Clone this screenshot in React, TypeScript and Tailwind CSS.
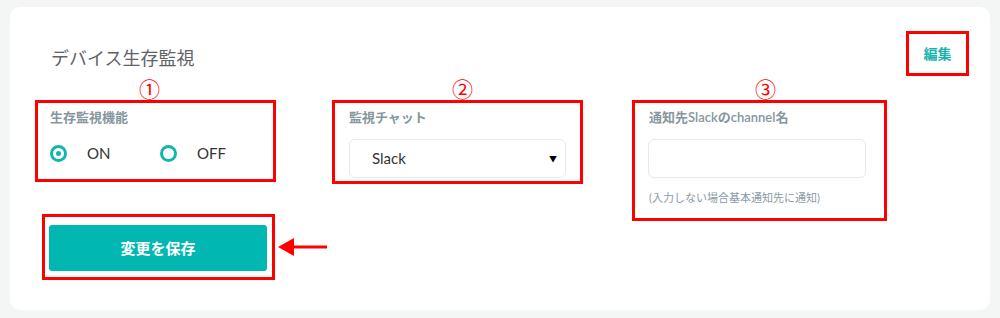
import React, { useState } from 'react';

const FONT = { fontFamily: 'Lato, "Noto Sans CJK JP", sans-serif' };
const CJK = { fontFamily: '"Noto Sans CJK JP", sans-serif' };

const Radio = ({ checked }: { checked: boolean }) => (
  <span className="flex h-[17px] w-[17px] shrink-0 items-center justify-center rounded-full border-[3px] border-[#13b5ad]">
    {checked && <span className="h-[5px] w-[5px] rounded-full bg-[#13b5ad]" />}
  </span>
);

const Marker = ({ n, offset }: { n: string; offset: string }) => (
  <div className={`h-[24px] text-[21px] leading-[24px] text-[#ff0000] ${offset}`} style={CJK}>
    {n}
  </div>
);

export default function App() {
  const [enabled, setEnabled] = useState(true);
  const [channel, setChannel] = useState('');

  return (
    <div className="h-[318px] w-[1000px] bg-[#f4f5f5] px-[10px] pt-[7px]" style={FONT}>
      <div className="h-[303px] rounded-[10px] bg-white">
        {/* header */}
        <div className="flex items-start justify-between pl-[41px] pr-[21px] pt-[24px]">
          <h2 className="mt-[14px] text-[18px] leading-[26px] text-[#5f6368]">デバイス生存監視</h2>
          <div className="flex h-[45px] w-[63px] items-center justify-center border-[3px] border-[#ff0000] text-[14px] font-semibold text-[#19b3ab]">
            編集
          </div>
        </div>

        {/* settings */}
        <div className="flex items-start pl-[25px]">
          <div className="flex w-[241px] shrink-0 flex-col">
            <Marker n="①" offset="ml-[104px]" />
            <div className="h-[82px] w-[241px] border-[3px] border-[#ff0000] pl-[12px] pt-[5px]">
              <div className="text-[13px] font-semibold leading-[18px] text-[#8596a0]">生存監視機能</div>
              <div className="mt-[17px] flex h-[20px] items-center">
                <button className="flex w-[110px] shrink-0 items-center" onClick={() => setEnabled(true)}>
                  <Radio checked={enabled} />
                  <span className="ml-[20px] text-[15px] text-[#333333]">ON</span>
                </button>
                <button className="flex items-center" onClick={() => setEnabled(false)}>
                  <Radio checked={!enabled} />
                  <span className="ml-[20px] text-[15px] text-[#333333]">OFF</span>
                </button>
              </div>
            </div>
            <div className="ml-[7px] mt-[32px] flex items-center">
              <div className="h-[66px] w-[233px] shrink-0 border-[3px] border-[#ff0000] pl-[4px] pt-[8px]">
                <button className="h-[46px] w-[218px] rounded-[3px] bg-[#00b8b1] text-[15px] font-bold text-white">
                  変更を保存
                </button>
              </div>
              <svg className="ml-[3px] shrink-0" width="50" height="22" viewBox="0 0 50 22">
                <line x1="12" y1="11" x2="49" y2="11" stroke="#ff0000" strokeWidth="3" />
                <polygon points="0,11 16,2 16,20" fill="#ff0000" />
              </svg>
            </div>
          </div>

          <div className="ml-[56px] flex w-[251px] shrink-0 flex-col">
            <Marker n="②" offset="ml-[120px]" />
            <div className="h-[84px] w-[251px] border-[3px] border-[#ff0000] pl-[14px] pt-[5px]">
              <div className="text-[13px] font-semibold leading-[18px] text-[#8596a0]">監視チャット</div>
              <div className="mt-[13px] flex h-[39px] w-[217px] items-center justify-between rounded-[6px] border border-[#e6e9ee] pl-[22px] pr-[8px]">
                <span className="text-[15px] text-[#333333]">Slack</span>
                <span className="text-[8px] text-black">▼</span>
              </div>
            </div>
          </div>

          <div className="ml-[49px] flex w-[255px] shrink-0 flex-col">
            <Marker n="③" offset="ml-[123px]" />
            <div className="h-[121px] w-[255px] border-[3px] border-[#ff0000] pl-[13px] pt-[5px]">
              <div className="ml-[1px] text-[13px] font-semibold leading-[18px] text-[#8596a0]">通知先Slackのchannel名</div>
              <input
                value={channel}
                onChange={(e) => setChannel(e.target.value)}
                className="mt-[13px] block h-[39px] w-[218px] rounded-[6px] border border-[#e6e9ee] px-3 text-[14px] outline-none"
              />
              <div className="ml-[1px] mt-[12px] text-[11px] leading-[16px] text-[#8c9aa6]">(入力しない場合基本通知先に通知)</div>
            </div>
          </div>
        </div>
      </div>
    </div>
  );
}
